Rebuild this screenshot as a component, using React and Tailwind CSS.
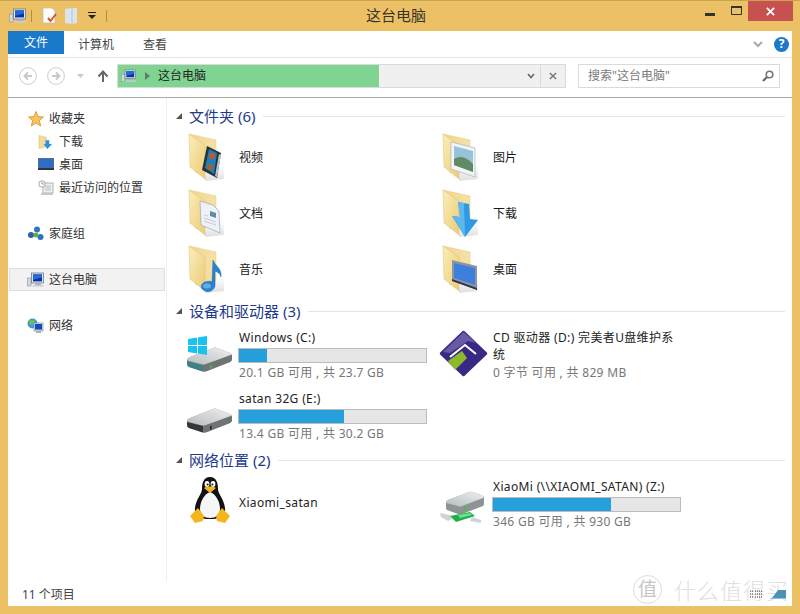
import React from "react";

const font = { fontFamily: '"Noto Sans","Noto Sans CJK SC",sans-serif' };

function PcIcon({ className = "w-[17px] h-[16px]" }) {
  return (
    <svg viewBox="0 0 17 16" className={className}>
      <rect x="0.5" y="6" width="3.5" height="8" fill="#d5d9de" stroke="#8a939c" strokeWidth="0.6" />
      <rect x="4.5" y="1" width="12" height="10" fill="#dfe5ea" stroke="#6f7c88" strokeWidth="0.8" />
      <rect x="6" y="2.4" width="9" height="7" fill="#0b2fa8" />
      <path d="M6 2.4h9v3L6 8z" fill="#2168d8" />
      <path d="M9 11h4l1 2H8z" fill="#a8b0b8" />
      <rect x="5.5" y="13" width="11" height="1.6" fill="#c9ced4" />
    </svg>
  );
}

function Folder({ children }) {
  return (
    <svg viewBox="0 0 56 52" className="w-[56px] h-[52px] shrink-0">
      <defs>
        <linearGradient id="fb" x1="0" y1="0" x2="1" y2="0">
          <stop offset="0" stopColor="#f0d58c" />
          <stop offset="1" stopColor="#f5e2a8" />
        </linearGradient>
        <linearGradient id="ff" x1="0" y1="0" x2="1" y2="1">
          <stop offset="0" stopColor="#fbeeb9" />
          <stop offset="1" stopColor="#eccb78" />
        </linearGradient>
        <linearGradient id="fs" x1="0" y1="0" x2="0" y2="1">
          <stop offset="0" stopColor="#d8d8d8" stopOpacity="0" />
          <stop offset="1" stopColor="#d0d0d0" stopOpacity="0.7" />
        </linearGradient>
      </defs>
      <path d="M19 36L38 34V48L19 50z" fill="url(#fs)" />
      <path d="M3 3L12 5L30 9V38L10 42z" fill="url(#fb)" stroke="#e4c980" strokeWidth="0.5" />
      <path d="M3 3L19 14V48L4 36z" fill="url(#ff)" stroke="#dfc277" strokeWidth="0.5" />
      {children}
    </svg>
  );
}

const overlays = {
  video: (
    <g>
      <path d="M16 39L21 15L35 22L31 47z" fill="#26323c" />
      <path d="M19 37L23 18L31 22L28 43z" fill="#1f7fbc" />
      <circle cx="26" cy="25" r="3" fill="#c8552a" />
      <circle cx="24" cy="36" r="3" fill="#a4622a" />
      <path d="M33 23L35 24L31 46L29 45z" fill="#b9c4cc" />
    </g>
  ),
  doc: (
    <g>
      <path d="M14 14L27 18L33 24L34 46L15 38z" fill="#eef1f6" stroke="#9ca6b8" strokeWidth="0.7" />
      <path d="M24 24l6 2v5l-6-2z" fill="#5d8cab" />
      <path d="M18 31l12 4M18 34l12 4M18 28l4 1" stroke="#b6bcc6" strokeWidth="0.7" />
    </g>
  ),
  music: (
    <g>
      <path d="M27 17C29 23 36 25 35 34C34 30 31 29 29 28V42C29 47 23 50 19 48C14 46 14 41 19 39C22 38 25 38 26 39z" fill="#2a82cf" stroke="#1e68ae" strokeWidth="0.5" />
      <ellipse cx="21" cy="43" rx="4" ry="2.5" fill="#60aee6" />
    </g>
  ),
  pic: (
    <g>
      <path d="M11 11L35 17V46L11 38z" fill="#f2f5f7" stroke="#aab5bd" strokeWidth="0.7" />
      <path d="M14 15L33 20V41L14 34z" fill="#96c3d9" />
      <path d="M14 28Q23 22 33 33V41L14 34z" fill="#5f8a62" />
    </g>
  ),
  down: (
    <g>
      <path d="M18 15L29 17L30 32L38 33L25 50L12 29L20 30z" fill="#2d9ae2" />
      <path d="M18 15L24 16L25 49L12 29L20 30z" fill="#5cb8ef" />
    </g>
  ),
  desk: (
    <g>
      <path d="M12 17L37 23V47L12 38z" fill="#8a96a4" />
      <path d="M14 20L35 25V42L14 35z" fill="#3f7fdc" />
      <path d="M12 36L37 45V47L12 38z" fill="#2d3744" />
    </g>
  ),
};

function FolderTile({ name, o }) {
  return (
    <div className="flex items-center h-[56px]">
      <Folder>{overlays[o]}</Folder>
      <span className="ml-[-3px] mt-[2px] text-[12px] text-[#1a1a1a]">{name}</span>
    </div>
  );
}

function Bar({ pct }) {
  return (
    <div className="w-[189px] h-[15px] ml-[-1px] bg-[#e6e6e6] border border-[#bcbcbc] mt-[2px] mb-px">
      <div className="h-full bg-[#26a0da]" style={{ width: pct + "%" }} />
    </div>
  );
}

function Hdd({ light }) {
  return (
    <g transform="translate(0 4)" strokeLinejoin="round">
      <path d="M3 30Q3 28 6 27L29 18Q31 17 33 18L46 23Q48 24 48 26V29Q48 31 46 32L23 41Q20 42 17 41L5 37Q3 36 3 34z" fill="#8e9394" />
      <path d="M3 30Q3 28 6 27L29 18Q31 17 33 18L46 23Q48 24 46 25L23 34Q20 35 17 34L5 31z" fill="url(#hdt)" />
      <path d="M3 31L19 35V41.5L5 37Q3 36 3 34z" fill={light ? "#343637" : "#3f7f85"} />
      <path d="M19 35L48 25V29Q48 31 46 32L23 41Q21 41.6 19 41.5z" fill="#6e7374" />
      <rect x="26" y="35" width="1.6" height="3.5" fill={light ? "#222" : "#36c24e"} />
      <ellipse cx="30" cy="24" rx="4" ry="1.8" fill="#d8d9da" />
    </g>
  );
}

function DriveIcon({ kind }) {
  return (
    <svg viewBox="0 0 52 52" className="w-[52px] h-[52px] shrink-0">
      <defs>
        <linearGradient id="hdt" x1="0" y1="1" x2="1" y2="0">
          <stop offset="0" stopColor="#b7bbbc" />
          <stop offset="1" stopColor="#eef0f0" />
        </linearGradient>
      </defs>
      <Hdd light={kind !== "win"} />
      {kind === "win" && (
        <g fill="#19c3f0" transform="translate(0 3)">
          <path d="M4 10L13 8.5V16H4z" />
          <path d="M14 8.3L23 7V16H14z" />
          <path d="M4 17H13V24.5L4 23z" />
          <path d="M14 17H23V26L14 24.6z" />
        </g>
      )}
    </svg>
  );
}

function CdIcon() {
  return (
    <svg viewBox="0 0 52 52" className="w-[52px] h-[52px] shrink-0">
      <path d="M25.5 6L48 27.5L25.5 49L3 27.5z" fill="#3a2984" stroke="#3a2984" strokeWidth="2.5" strokeLinejoin="round" />
      <path d="M25.5 6L38 17L30 15L12 27L5 26z" fill="#6a5aa6" />
      <path d="M12 31L27 19L38 28" fill="none" stroke="#fff" strokeWidth="2" />
      <path d="M10 35L24 25L29 32L17 44z" fill="#8bbb2b" />
    </svg>
  );
}

function Penguin() {
  return (
    <svg viewBox="0 0 44 50" className="w-[44px] h-[50px] shrink-0">
      <path d="M22 2C15 2 14 9 14 14C14 19 8 24 7 33C6 40 11 44 22 44C33 44 38 40 37 33C36 24 30 19 30 14C30 9 29 2 22 2z" fill="#111" />
      <path d="M22 17C16 19 12 27 12 34C12 40 16 43 22 43C28 43 32 40 32 34C32 27 28 19 22 17z" fill="#f6f6f6" />
      <ellipse cx="19" cy="9" rx="2.4" ry="3" fill="#fff" />
      <ellipse cx="25" cy="9" rx="2.4" ry="3" fill="#fff" />
      <circle cx="19.6" cy="9.6" r="1" fill="#111" />
      <circle cx="24.4" cy="9.6" r="1" fill="#111" />
      <path d="M16 13C19 11 25 11 28 13L22 18z" fill="#f4b61c" />
      <path d="M2 41L10 33L16 41L15 46L7 48z" fill="#f4b61c" />
      <path d="M42 41L34 33L28 41L29 46L37 48z" fill="#f4b61c" />
    </svg>
  );
}

function NetDriveIcon() {
  return (
    <svg viewBox="0 0 52 52" className="w-[52px] h-[52px] shrink-0">
      <defs>
        <linearGradient id="hdn" x1="0" y1="1" x2="1" y2="0">
          <stop offset="0" stopColor="#b7bbbc" />
          <stop offset="1" stopColor="#eef0f0" />
        </linearGradient>
      </defs>
      <path d="M8 28Q8 26 10 25L31 17Q33 16.500 35 17L45 21Q46 22 46 23V29Q46 30 45 31L24 39Q22 40 20 39L9 35Q8 34 8 33z" fill="#8e9394" />
      <path d="M8 28Q8 26 10 25L31 17Q33 16.500 35 17L45 21Q46 22 45 23L24 31Q22 32 20 31z" fill="url(#hdn)" />
      <rect x="26" y="31" width="1.8" height="4" fill="#36c24e" />
      <path d="M2 38L12 40L14 44L10 46L3 42z" fill="#cfd3d5" />
      <path d="M12 41L32 37L37 41L18 47z" fill="#20b04a" />
      <path d="M20 40L32 38L34 40L22 43z" fill="#6de08a" />
      <path d="M34 42L43 45V48L32 46z" fill="#cfd3d5" />
    </svg>
  );
}

function NavRow({ icon, label, indent, active, mt }) {
  return (
    <div className={`flex items-center h-[23px] text-[12px] text-[#333] ${indent ? "pl-[29px] gap-[5px]" : "gap-[5px]"} ${active ? "bg-[#f2f2f2] border border-[#dedede] mx-px pl-[17px]" : ""} ${!indent && !active ? "pl-[19px]" : ""} ${mt || ""}`}>
      <span className="w-[17px] h-[17px] flex items-center justify-center shrink-0">{icon}</span>
      <span>{label}</span>
    </div>
  );
}

function Header({ label, className = "" }) {
  return (
    <div className={`flex items-center h-[22px] pl-[9px] pr-[7px] ${className}`}>
      <svg viewBox="0 0 6 6" className="w-[6px] h-[6px] mr-[7px]"><path d="M6 0V6H0z" fill="#555" /></svg>
      <span className="text-[15px] text-[#1e3a8a] whitespace-nowrap">{label}</span>
      <div className="flex-1 h-px bg-[#e5e5e5] ml-[8px]" />
    </div>
  );
}

function DriveTile({ icon, name, pct, sub }) {
  return (
    <div className="flex items-start h-[61px]">
      <div className="w-[52px] mt-[4px] shrink-0 flex justify-center">{icon}</div>
      <div className="w-[184px] ml-[3px] pt-[7px]">
        <div className="text-[12px] leading-[17px] tracking-[0.35px] text-[#222]">{name}</div>
        {pct != null ? <Bar pct={pct} /> : <div className="h-px" />}
        <div className="text-[12px] leading-[17px] tracking-[0.3px] text-[#777] whitespace-nowrap">{sub}</div>
      </div>
    </div>
  );
}

export default function App() {
  return (
    <div style={font} className="relative w-[800px] h-[614px] overflow-hidden bg-[#ecc165] border-t border-[#c9a34e] flex flex-col">
      {/* title bar */}
      <div className="h-[30px] flex items-start pl-[9px] shrink-0">
        <div className="flex items-center h-[28px] mt-px">
          <PcIcon />
          <div className="w-px h-[12px] bg-[#a8914f] ml-[5px] mr-[10px]" />
          <svg viewBox="0 0 16 16" className="w-[16px] h-[16px]">
            <path d="M1 0H10L13 3V15H1z" fill="#fdfdfd" stroke="#b5b5b5" strokeWidth="0.6" />
            <path d="M6 10l2.5 3L14 6" fill="none" stroke="#e0512b" strokeWidth="2" />
          </svg>
          <svg viewBox="0 0 14 16" className="w-[14px] h-[16px] ml-[6px]">
            <path d="M1 1L8 0H13V15L8 16L1 15z" fill="#d9e4ef" />
            <path d="M8 0V16" stroke="#b7c6d6" strokeWidth="1" />
          </svg>
          <svg viewBox="0 0 8 8" className="w-[8px] h-[8px] ml-[10px]">
            <path d="M0 0.5H8" stroke="#222" strokeWidth="1" />
            <path d="M0 3H8L4 7z" fill="#222" />
          </svg>
          <div className="w-px h-[12px] bg-[#a8914f] ml-[10px]" />
        </div>
        <div className="flex-1 text-center text-[15px] leading-[29px] text-[#3a3328] pr-[20px]">这台电脑</div>
        <div className="flex items-start">
          <svg viewBox="0 0 10 3" className="w-[10px] h-[3px] mt-[12px]"><rect width="10" height="3" fill="#333" /></svg>
          <svg viewBox="0 0 11 9" className="w-[11px] h-[9px] mt-[5px] ml-[16px]"><path d="M0.5 1H10.5V8.5H0.5z" fill="none" stroke="#333" /><path d="M0 1H11" stroke="#333" strokeWidth="2" /></svg>
          <div className="w-[45px] h-[20px] ml-[6px] bg-[#c75050] flex items-center justify-center">
            <svg viewBox="0 0 10 10" className="w-[9px] h-[9px]"><path d="M1 1L9 9M9 1L1 9" stroke="#fff" strokeWidth="2" /></svg>
          </div>
          <div className="w-[7px]" />
        </div>
      </div>

      {/* window body */}
      <div className="flex-1 mx-[8px] mb-[8px] bg-white flex flex-col min-h-0">
        {/* ribbon */}
        <div className="h-[27px] flex items-start border-b border-[#e3e3e3] shrink-0 text-[12px]">
          <div className="w-[56px] h-[23px] bg-[#1979ca] text-white flex items-center justify-center">文件</div>
          <div className="ml-[14px] h-[27px] flex items-center text-[#444]">计算机</div>
          <div className="ml-[29px] h-[27px] flex items-center text-[#444]">查看</div>
          <div className="flex-1" />
          <div className="h-[26px] flex items-center pr-[3px]">
            <svg viewBox="0 0 10 7" className="w-[10px] h-[7px]"><path d="M1 1L5 5L9 1" fill="none" stroke="#a9a9a9" strokeWidth="2" /></svg>
            <div className="ml-[11px] w-[15px] h-[15px] rounded-full bg-[#1b78cb] text-white text-[12px] font-bold flex items-center justify-center">?</div>
          </div>
        </div>

        {/* address row */}
        <div className="h-[40px] flex items-center border-b border-[#a9a9a9] shrink-0 pl-[11px] pb-[3px]">
          <svg viewBox="0 0 18 18" className="w-[18px] h-[18px]">
            <circle cx="9" cy="9" r="8.4" fill="#fff" stroke="#d6d6d6" strokeWidth="1.2" />
            <path d="M13 9H6M9 5.5L5.5 9L9 12.5" fill="none" stroke="#c9c9c9" strokeWidth="2" />
          </svg>
          <svg viewBox="0 0 18 18" className="w-[18px] h-[18px] ml-[10px]">
            <circle cx="9" cy="9" r="8.4" fill="#fff" stroke="#d6d6d6" strokeWidth="1.2" />
            <path d="M5 9H12M9 5.5L12.5 9L9 12.5" fill="none" stroke="#c9c9c9" strokeWidth="2" />
          </svg>
          <svg viewBox="0 0 7 4" className="w-[7px] h-[4px] ml-[12px]"><path d="M0 0H7L3.5 4z" fill="#c9c9c9" /></svg>
          <svg viewBox="0 0 12 13" className="w-[12px] h-[13px] ml-[13px]">
            <path d="M6 12V2M1.5 6.5L6 1.5L10.5 6.5" fill="none" stroke="#666" strokeWidth="2" />
          </svg>
          <div className="ml-[8px] w-[449px] h-[24px] flex border border-[#dadada] bg-[#f0f0f0]">
            <div className="w-[261px] bg-[#80d492] flex items-center pl-[3px] text-[12px] text-[#222]">
              <PcIcon className="w-[15px] h-[14px]" />
              <svg viewBox="0 0 5 8" className="w-[5px] h-[8px] ml-[9px]"><path d="M0 0L5 4L0 8z" fill="#5f7f66" /></svg>
              <span className="ml-[8px]">这台电脑</span>
            </div>
            <div className="flex-1 flex items-center justify-end pr-[5px]">
              <svg viewBox="0 0 8 6" className="w-[8px] h-[6px]"><path d="M1 1L4 4.5L7 1" fill="none" stroke="#666" strokeWidth="1.6" /></svg>
            </div>
            <div className="w-[25px] border-l border-[#dadada] flex items-center justify-center">
              <svg viewBox="0 0 9 9" className="w-[8px] h-[8px]"><path d="M1 1L8 8M8 1L1 8" stroke="#777" strokeWidth="1.6" /></svg>
            </div>
          </div>
          <div className="ml-[12px] w-[202px] h-[24px] border border-[#dadada] flex items-center pl-[9px] pr-[5px] text-[12px] text-[#7a7a7a]">
            <span className="flex-1">搜索"这台电脑"</span>
            <svg viewBox="0 0 12 12" className="w-[12px] h-[12px]">
              <circle cx="7.5" cy="4.5" r="3.3" fill="none" stroke="#777" strokeWidth="1.6" />
              <path d="M5 7L1 11" stroke="#666" strokeWidth="2.2" />
            </svg>
          </div>
        </div>

        {/* main */}
        <div className="flex-1 flex min-h-0">
          <div className="w-[159px] shrink-0 border-r border-[#f1f1f1] pt-[9px] pb-[12px] flex flex-col">
            <NavRow label="收藏夹" icon={<svg viewBox="0 0 16 16" className="w-[16px] h-[16px]"><path d="M8 0.5L10 5.6L15.5 6L11.3 9.5L12.7 15L8 12L3.3 15L4.7 9.5L0.5 6L6 5.6z" fill="#f7c65a" stroke="#e08a1e" strokeWidth="0.8" /></svg>} />
            <NavRow indent label="下载" icon={<svg viewBox="0 0 16 16" className="w-[15px] h-[16px]"><path d="M1 1L9 3V13L1 15z" fill="#f3dc97" stroke="#d6b964" strokeWidth="0.5" /><path d="M8 6H12V10H15L10 15.5L6 10H8z" fill="#2c92dc" /></svg>} />
            <NavRow indent label="桌面" icon={<svg viewBox="0 0 16 13" className="w-[16px] h-[13px]"><rect width="16" height="12" fill="#4f6f95" /><rect x="1" y="1" width="14" height="8.5" fill="#2f6cc4" /><rect y="10" width="16" height="2" fill="#27364a" /></svg>} />
            <NavRow indent label="最近访问的位置" icon={<svg viewBox="0 0 16 16" className="w-[16px] h-[16px]"><rect x="5" y="3" width="10" height="10" fill="#eef0f1" stroke="#9aa2a8" strokeWidth="0.8" /><path d="M7 6h6M7 8h6M7 10h6" stroke="#aab2b8" strokeWidth="0.8" /><circle cx="4" cy="4" r="3.2" fill="#fff" stroke="#8a9298" strokeWidth="0.8" /><path d="M4 2V4H6" stroke="#777" strokeWidth="0.7" fill="none" /><rect x="3" y="13" width="12" height="2" fill="#c4c9cc" /></svg>} />
            <NavRow mt="mt-[23px]" label="家庭组" icon={<svg viewBox="0 0 16 16" className="w-[16px] h-[16px]"><circle cx="9" cy="3.5" r="3" fill="#3a6fc6" /><circle cx="3" cy="9" r="3" fill="#2e5fa8" /><circle cx="12.5" cy="11" r="3" fill="#2f6fc8" /><circle cx="8" cy="9" r="2.5" fill="#5ab24a" /></svg>} />
            <NavRow active mt="mt-[23px]" label="这台电脑" icon={<PcIcon />} />
            <NavRow mt="mt-[23px]" label="网络" icon={<svg viewBox="0 0 17 16" className="w-[17px] h-[16px]"><circle cx="5.5" cy="5.5" r="5" fill="#3e9bd5" /><path d="M2 3Q5 1 8 3L7 6L3 7z" fill="#6fbf5c" /><rect x="7" y="5" width="9" height="8" fill="#dfe5ea" stroke="#6f7c88" strokeWidth="0.6" /><rect x="8" y="6" width="7" height="5.6" fill="#1449b8" /><rect x="9" y="13" width="5" height="2" fill="#a8b0b8" /></svg>} />
          </div>

          <div className="flex-1 min-w-0 pt-[7px]">
            <Header label="文件夹 (6)" />
            <div className="grid grid-cols-[254px_1fr] pl-[19px] mt-[2px]">
              <FolderTile name="视频" o="video" />
              <FolderTile name="图片" o="pic" />
              <FolderTile name="文档" o="doc" />
              <FolderTile name="下载" o="down" />
              <FolderTile name="音乐" o="music" />
              <FolderTile name="桌面" o="desk" />
            </div>
            <Header label="设备和驱动器 (3)" className="mt-[3px]" />
            <div className="grid grid-cols-[254px_1fr] pl-[17px]">
              <DriveTile icon={<DriveIcon kind="win" />} name="Windows (C:)" pct={15} sub="20.1 GB 可用 , 共 23.7 GB" />
              <DriveTile icon={<CdIcon />} name="CD 驱动器 (D:) 完美者U盘维护系统" sub="0 字节 可用 , 共 829 MB" />
              <DriveTile icon={<DriveIcon kind="usb" />} name="satan 32G (E:)" pct={56} sub="13.4 GB 可用 , 共 30.2 GB" />
            </div>
            <Header label="网络位置 (2)" className="mt-[5px]" />
            <div className="grid grid-cols-[254px_1fr] pl-[17px]">
              <div className="flex items-center h-[61px]">
                <div className="w-[52px] flex justify-center -mt-[4px]"><Penguin /></div>
                <span className="ml-[3px] mt-[3px] text-[12px] tracking-[0.35px] text-[#222]">Xiaomi_satan</span>
              </div>
              <DriveTile icon={<NetDriveIcon />} name="XiaoMi (\\XIAOMI_SATAN) (Z:)" pct={63} sub="346 GB 可用 , 共 930 GB" />
            </div>
          </div>
        </div>

        {/* status */}
        <div className="h-[24px] shrink-0 flex items-center pl-[14px] pt-[2px] text-[12px] text-[#444]">11 个项目</div>
      </div>

      {/* watermark and view switch */}
      <div className="absolute left-[633px] top-[574px] flex items-center pointer-events-none">
        <div className="w-[29px] h-[29px] rounded-full border border-[#dcdcdc] flex items-center justify-center text-[19px] text-[#c6c6c6]">值</div>
        <span className="ml-[12px] text-[22px] leading-[28px] tracking-[1px] font-light whitespace-nowrap text-[#e0e0e0]">什么值得买</span>
      </div>
      <div className="absolute left-[750px] top-[589px] flex items-center gap-[6px] pointer-events-none">
        <svg viewBox="0 0 14 9" className="w-[14px] h-[9px]"><path d="M0 1H3M5 1H13M0 4H3M5 4H13M0 7H3M5 7H13" stroke="#333" strokeWidth="1.2" strokeDasharray="1 1" /></svg>
        <svg viewBox="0 0 16 9" className="w-[16px] h-[9px]"><path d="M2 8L8 0H16V8z" fill="#4a93b8" /><path d="M0 8H16V9H0z" fill="#8cc" /></svg>
      </div>
    </div>
  );
}
